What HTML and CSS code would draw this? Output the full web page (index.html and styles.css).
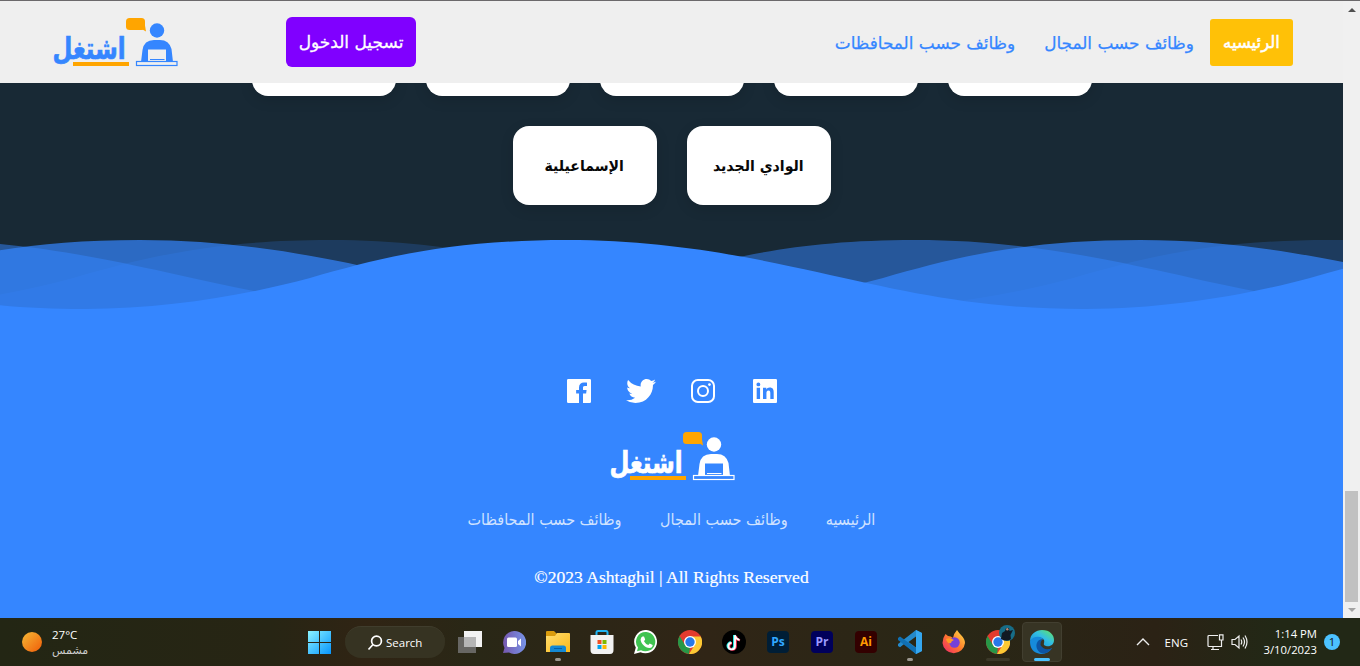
FILE: index.html
```html
<!DOCTYPE html>
<html lang="ar">
<head>
<meta charset="utf-8">
<title>اشتغل</title>
<link rel="stylesheet" href="styles.css">
</head>
<body>
<svg class="defs" width="0" height="0">
  <defs>
    <path id="wave" d="M-482 69C-400 69-320 55-257 38C-185 17-115 0 0 0C105 0 190 19 250 32C340 52 410 69 518 69V72H-482Z"/>
    <symbol id="logo" viewBox="0 0 128 52">
      <rect x="74" y="1" width="19" height="12" rx="3.500" fill="#ffa500"/>
      <path d="M88 11l6 3.500-1-6z" fill="#ffa500"/>
      <circle cx="105" cy="13.500" r="7.200" fill="currentColor"/>
      <path d="M89 45L90.500 33Q92 23 102 23H108Q117 23 119.500 32L121 45H114V32.500H96V45Z" fill="currentColor"/>
      <path d="M98 42.500H112.500" stroke="currentColor"/>
      <rect x="84.500" y="44.500" width="40.500" height="4" fill="none" stroke="currentColor" stroke-width="1.200"/>
      <path d="M21 47H77" stroke="#ffa500" stroke-width="4"/>
      <text class="logo-word" x="37" y="42" text-anchor="middle" textLength="73" lengthAdjust="spacingAndGlyphs" fill="currentColor" stroke="currentColor">اشتغل</text>
    </symbol>
    <linearGradient id="sun" x2="1" y2="1"><stop stop-color="#f6b936"/><stop offset="1" stop-color="#f05c08"/></linearGradient>
    <linearGradient id="win" x2="1" y2="1"><stop stop-color="#8bf3ff"/><stop offset="1" stop-color="#0795fd"/></linearGradient>
    <linearGradient id="chat" x2="1" y2="0"><stop stop-color="#7657ad"/><stop offset="1" stop-color="#7794e8"/></linearGradient>
    <linearGradient id="fold" x2="1" y2="1"><stop stop-color="#ffdd70"/><stop offset="1" stop-color="#fcb918"/></linearGradient>
    <linearGradient id="fox" x1="1" x2="0" y2="1"><stop stop-color="#ffe54a"/><stop offset=".5" stop-color="#ff7a2b"/><stop offset="1" stop-color="#f01f6f"/></linearGradient>
    <linearGradient id="edge" x1="0" x2="1" y1="1" y2="0"><stop stop-color="#1687d9"/><stop offset=".55" stop-color="#32bfe4"/><stop offset="1" stop-color="#68e857"/></linearGradient>
    <symbol id="chrome" viewBox="0 0 24 24">
      <circle cx="12" cy="12" r="12" fill="#e33b2e"/>
      <path d="M1.600 6L7 15L12 17.500L11 24A12 12 0 0 1 1.600 6Z" fill="#279847"/>
      <path d="M12 6.500H22.700A12 12 0 0 1 11 24L17 14.500Z" fill="#fcc934"/>
      <circle cx="12" cy="12" r="6" fill="#fff"/><circle cx="12" cy="12" r="4.700" fill="#2878e8"/>
    </symbol>
  </defs>
</svg>

<div class="browser">
  <div class="page">
    <header class="header">
      <svg class="logo" width="128" height="52"><use href="#logo"/></svg>
      <a class="login"><span>تسجيل الدخول</span></a>
      <nav class="nav" dir="rtl">
        <a class="nav-link active"><span>الرئيسيه</span></a>
        <a class="nav-link field"><span>وظائف حسب المجال</span></a>
        <a class="nav-link city"><span>وظائف حسب المحافظات</span></a>
      </nav>
    </header>
    <main class="cities">
      <div class="row cut"><i class="card"></i><i class="card"></i><i class="card"></i><i class="card"></i><i class="card"></i></div>
      <div class="row"><div class="card"><span>الإسماعيلية</span></div><div class="card"><span>الوادي الجديد</span></div></div>
    </main>
    <svg class="waves" width="1343" height="71" fill="#3586ff">
      <g opacity=".2"><use href="#wave" x="-670"/><use href="#wave" x="330"/><use href="#wave" x="1330"/></g>
      <g opacity=".5"><use href="#wave" x="-85"/><use href="#wave" x="915"/></g>
      <g opacity=".7"><use href="#wave" x="140"/><use href="#wave" x="1140"/></g>
      <g><use href="#wave" x="-433"/><use href="#wave" x="567"/><use href="#wave" x="1567"/></g>
    </svg>
    <footer class="footer">
      <div class="social">
        <svg width="32" height="32" viewBox="0 0 512 512" fill="#fff"><path d="M426.800 64H85.200A21.200 21.200 0 0 0 64 85.200v341.600A21.200 21.200 0 0 0 85.200 448H256V296h-45.900v-56H256v-41.500c0-49.600 34.400-76.600 78.700-76.600 21.200 0 44 1.600 49.300 2.300v51.800h-35.300c-24.100 0-28.700 11.400-28.700 28.200V240h57.400l-7.500 56H320v152h106.800a21.200 21.200 0 0 0 21.200-21.200V85.200A21.200 21.200 0 0 0 426.800 64z"/></svg>
        <svg width="32" height="32" viewBox="0 0 512 512" fill="#fff"><path d="M496 109.500a201.800 201.800 0 0 1-56.550 15.300 97.510 97.510 0 0 0 43.330-53.600 197.740 197.740 0 0 1-62.560 23.500A99.140 99.140 0 0 0 348.310 64c-54.420 0-98.460 43.400-98.460 96.900a93.210 93.210 0 0 0 2.540 22.100 280.700 280.700 0 0 1-203-101.300A95.690 95.690 0 0 0 36 130.400c0 33.600 17.530 63.300 44 80.700A97.500 97.500 0 0 1 35.220 199v1.200c0 47 34 86.100 79 95a100.760 100.760 0 0 1-25.940 3.400 94.380 94.380 0 0 1-18.510-1.800c12.510 38.500 48.920 66.500 92.050 67.300A199.590 199.590 0 0 1 39.500 405.600a203 203 0 0 1-23.500-1.400A278.680 278.680 0 0 0 166.740 448c181.360 0 280.440-147.700 280.440-275.800 0-4.200-.11-8.400-.31-12.500A198.480 198.480 0 0 0 496 109.500z"/></svg>
        <svg width="32" height="32" viewBox="0 0 512 512" fill="#fff"><rect x="80" y="80" width="352" height="352" rx="93" fill="none" stroke="#fff" stroke-width="32"/><circle cx="256" cy="256" r="80" fill="none" stroke="#fff" stroke-width="32"/><circle cx="359" cy="153" r="22"/></svg>
        <svg width="32" height="32" viewBox="0 0 512 512" fill="#fff"><path d="M430 64H82Q64 64 64 82V430Q64 448 82 448H430Q448 448 448 430V82Q448 64 430 64zM177 384h-54V205.500h54zm-27-202.500a31 31 0 1 1 0-62 31 31 0 0 1 0 62zM395 384h-54v-87.100c0-20.600-.4-47.200-29-47.200s-33 22.500-33 45.700V384h-55V205.500h53v24.700h1c8-15 26-29.200 52-29.200 55 0 65 35.400 65 83z"/></svg>
      </div>
      <svg class="foot-logo" width="128" height="52"><use href="#logo"/></svg>
      <nav class="foot-nav" dir="rtl"><a class="f1"><span>الرئيسيه</span></a><a class="f2"><span>وظائف حسب المجال</span></a><a class="f3"><span>وظائف حسب المحافظات</span></a></nav>
      <p class="copy">©2023 Ashtaghil | All Rights Reserved</p>
    </footer>
  </div>
  <div class="scroll"><i class="up"></i><i class="thumb"></i><i class="down"></i></div>
</div>

<div class="taskbar">
  <div class="weather">
    <svg width="20" height="20"><circle cx="10" cy="10" r="10" fill="url(#sun)"/></svg>
    <div class="temp"><b>27°C</b><small><span>مشمس</span></small></div>
  </div>
  <svg class="start" width="24" height="24"><path d="M1 1H12V12H1ZM13 1H24V12H13ZM1 13H12V24H1ZM13 13H24V24H13Z" fill="url(#win)"/></svg>
  <div class="search"><svg width="16" height="16" fill="none" stroke="#fff" stroke-width="1.700"><circle cx="9.500" cy="6" r="4.900"/><path d="M6 9.500L1.500 14.500"/></svg><span>Search</span></div>
  <div class="apps">
    <div class="app"><svg width="24" height="24"><rect x="6" y="1" width="18" height="16" fill="#f2f2f2"/><rect y="7" width="18" height="16" fill="#777" opacity=".8"/><rect x="6" y="7" width="12" height="10" fill="#b5b5b5"/></svg></div>
    <div class="app"><svg width="24" height="24"><path d="M12 1A11.500 11.500 0 1 1 7 22.500L1 23L2.500 18A11.500 11.500 0 0 1 12 1Z" fill="url(#chat)"/><rect x="5" y="7.500" width="10" height="9.500" rx="1.500" fill="#fff"/><path d="M16 11L19 8.500V16.500L16 14Z" fill="#fff"/></svg></div>
    <div class="app run"><svg width="24" height="24"><path d="M0 2Q0 1 1 1H8L11 4V9H0Z" fill="#d99b0d"/><path d="M0 6H9L11 3H23Q24 3 24 4V22H0Z" fill="url(#fold)"/><path d="M4 22V18Q4 15.500 6.500 15.500H17.500Q20 15.500 20 18V22Z" fill="#1489d4"/><path d="M8 18.500H16" stroke="#075fa5"/></svg></div>
    <div class="app"><svg width="24" height="24"><path d="M6.500 6V2.500Q6.500 1 8 1H16Q17.500 1 17.500 2.500V6" fill="none" stroke="#20b4f3" stroke-width="2"/><path d="M.5 5H23.500V20Q23.500 24 20 24H4Q.5 24 .5 20Z" fill="#f2f2f2"/><path d="M7.500 10H11.500V14H7.500Z" fill="#f25022"/><path d="M12.500 10H16.500V14H12.500Z" fill="#7fba00"/><path d="M7.500 15H11.500V19H7.500Z" fill="#00a4ef"/><path d="M12.500 15H16.500V19H12.500Z" fill="#ffb900"/></svg></div>
    <div class="app"><svg width="24" height="24"><path d="M12.500 0A11.700 11.700 0 1 1 6.500 22.300L0 24L1.800 17.500A11.700 11.700 0 0 1 12.500 0Z" fill="#fff"/><path d="M12.500 2A9.700 9.700 0 1 1 7 20.200L3 21.200L4 17.500A9.700 9.700 0 0 1 12.500 2Z" fill="#3fc351"/><path d="M8.500 6.500L10 6.500L11.200 9.600L10 11.200Q11.500 14 14.300 15L15.700 13.400L18.700 15Q18.500 18 15.500 18C11 18 6.500 13 6.600 9.500Q7 7 8.500 6.500Z" fill="#fff"/></svg></div>
    <div class="app"><svg width="24" height="24"><use href="#chrome"/></svg></div>
    <div class="app"><svg width="24" height="24" fill="none" stroke-width="2.300"><circle cx="12" cy="12" r="12" fill="#000"/><path d="M12.200 5V15.500A3.300 3.300 0 1 1 9 12.500M12.200 5Q13 9 17 9.500" stroke="#25f4ee"/><path d="M13.700 6V16.500A3.300 3.300 0 1 1 10 13M13.700 6Q14.500 9.500 18 10.500" stroke="#fe2c55"/><path d="M13 5.300V16A3.300 3.300 0 1 1 9.500 12.800M13 5.300Q13.800 9.300 17.500 9.800" stroke="#fff" stroke-width="1.800"/></svg></div>
    <div class="app"><em class="tile ps">Ps</em></div>
    <div class="app"><em class="tile pr">Pr</em></div>
    <div class="app"><em class="tile ai">Ai</em></div>
    <div class="app run"><svg width="24" height="24"><path d="M18 0L24 3V21L18 24L6.500 13.800L2 17.200L0 16V14L18 0Z" fill="#2489ca"/><path d="M0 8L2 6.500L18 18V24L0 10Z" fill="#1070b3"/><path d="M18 6.500V17.500L10.500 12Z" fill="#292716"/><path d="M18 0L24 3V21L18 24Z" fill="#35a7ef"/></svg></div>
    <div class="app"><svg width="24" height="24"><path d="M15 0Q17 3 19 5Q23 9 23 13A11.300 11.300 0 0 1 .5 13Q.5 8 3.500 4L6 6Q9 6 11 8Q12 3 15 0Z" fill="url(#fox)"/><circle cx="12.500" cy="12.500" r="5.200" fill="#7541d8"/><path d="M4 9Q8 7 12 10Q9 11 9 13Q5 14 4 9Z" fill="#ff9b24"/></svg></div>
    <div class="app faint"><svg width="30" height="30" viewBox="0 -6 30 30"><use href="#chrome" width="24" height="24"/><circle cx="21" cy="3" r="8" fill="#176d87"/><path d="M15 9L16 3L19 1L20-2H23L23.500 1L27 0L24.500 5L25 9Q21 12 15 9Z" fill="#111923"/><circle cx="21.300" cy="-.8" r="1.200" fill="#b98b75"/></svg></div>
    <div class="app current"><svg width="24" height="24"><path d="M0 11C0 4 6 0 12 0C20 0 24 5 24 10C24 15 20 17 16 16C12 15 15 13 14 10C13 7 7 6 0 11Z" fill="url(#edge)"/><path d="M0 11C3 6 11 5 14 10C9 8 7 13 10 17C13 21 18 21 22 18C18 24 12 25 7 23C2 21 0 17 0 11Z" fill="#168bdb"/><path d="M8 11C4 16 8 24 14 23.500C18 23 21 20 22 18C17 21 12 18 10.500 15Q10 12 12 10Q10 9 8 11Z" fill="#0d55a4"/></svg></div>
  </div>
  <div class="tray">
    <svg class="chev" width="14" height="8" fill="none" stroke="#eee" stroke-width="1.400"><path d="M1 7L7 1L13 7"/></svg>
    <span class="lang">ENG</span>
    <svg class="net" width="17" height="17" fill="none" stroke="#eee" stroke-width="1.200"><path d="M11 1.500H2Q1 1.500 1 2.500V11.500Q1 12.500 2 12.500H14.500V6.500M12.500 .8H16V6H12.500ZM6 12.500V15M4 15.500H12"/></svg>
    <svg class="vol" width="17" height="16" fill="none" stroke="#eee" stroke-width="1.200"><path d="M1 5.500H4L8 2V14L4 10.500H1ZM10 5.500Q11.500 8 10 10.500M12 3.500Q15 8 12 12.500M14 1.500Q18 8 14 14.500"/></svg>
    <div class="clock">1:14 PM<br>3/10/2023</div>
    <span class="count">1</span>
  </div>
</div>
</body>
</html>
```

FILE: styles.css
```css
* { box-sizing: border-box; }
body { margin: 0; width: 1360px; height: 666px; overflow: hidden; font-family: "DejaVu Sans", sans-serif; }
.defs { display: block; }
svg { display: block; flex: none; }
.browser { display: flex; height: 618px; border-top: 1px solid #6b696b; background: #efefef; }
.page { width: 1343px; background: #182935; }
.header { display: flex; align-items: flex-start; height: 82px; padding: 16px 50px 0 52px; background: #efefef; }
.logo { color: #3586ff; }
.logo-word { font: bold 30px "DejaVu Sans", sans-serif; stroke-width: .7px; }
.login, .nav-link, .card, .foot-nav a { display: flex; align-items: center; justify-content: center; white-space: nowrap; }
.login { width: 130px; height: 50px; margin-left: 106px; border-radius: 6px; background: #8000ff; color: #fff; font-size: 17px; -webkit-text-stroke: .3px; }
.nav { display: flex; margin-left: auto; padding-top: 2px; gap: 17px; font-size: 16.9px; -webkit-text-stroke: .25px; }
.nav-link { height: 47px; color: #3586ff; }
.active { width: 83px; border-radius: 3px; background: #ffc107; color: #fff; font-size: 16.500px; -webkit-text-stroke: .5px; }
.field { width: 148px; }
.city { width: 180px; margin-right: 13px; }
.cities { height: 157px; overflow: hidden; }
.row { display: flex; justify-content: center; gap: 30px; }
.card { width: 144px; height: 79px; border-radius: 16px; background: #fff; box-shadow: 0 4px 14px rgba(0,0,0,.12); font-size: 15px; font-weight: bold; color: #080808; }
.card span { transform: scaleX(.94); }
.cut { margin-top: -66px; margin-bottom: 30px; }
.waves { overflow: hidden; }
.footer { height: 308px; margin-top: -1px; padding-top: 65px; background: #3586ff; color: #fff; }
.social { display: flex; justify-content: center; gap: 30px; }
.foot-logo { margin: 24px 0 0 609px; }
.foot-nav { display: flex; justify-content: flex-start; gap: 38px; height: 24px; margin: 24px 467px 0; color: #cfe2ff; font-size: 16px; }
.foot-nav span { transform: scaleX(.9); }
.f1 { width: 50px; }
.f2 { width: 129px; }
.f3 { width: 154px; }
.copy { margin: 36px 0 0; text-align: center; font: 17.600px/21px "Liberation Serif", serif; -webkit-text-stroke: .2px; }
.scroll { display: flex; flex-direction: column; align-items: center; width: 17px; padding: 7px 0 6px; background: #f0f0f0; }
.up, .down { border: 4px solid transparent; }
.up { border-top: 0; border-bottom-color: #505050; }
.down { border-bottom: 0; border-top-color: #a3a3a3; margin-top: 6px; }
.thumb { width: 13px; height: 111px; margin-top: auto; background: #c1c1c1; }
.taskbar { display: flex; align-items: center; height: 48px; background: linear-gradient(90deg, #232614, #272514 20%, #302414 27%, #292716 35%, #302516 52%, #292716 70%, #2b2215 85%, #222816 94%, #222816); color: #fff; font-family: "Open Sans", sans-serif; }
.weather { display: flex; align-items: center; gap: 10px; width: 285px; padding-left: 22px; }
.temp { font-size: 11.500px; line-height: 17px; }
.temp b { display: block; font-weight: 400; }
.temp small { display: block; font: 11px/15px "DejaVu Sans", sans-serif; color: #ccc; }
.start { margin-left: 22px; }
.search { display: flex; align-items: center; gap: 3px; width: 100px; height: 32px; margin-left: 14px; padding-left: 22px; border-radius: 16px; background: #363322; border-top: 1px solid #403d2d; font-size: 11.500px; }
.apps { display: flex; align-items: center; gap: 4px; margin-left: 5px; }
.app { position: relative; display: flex; align-items: center; justify-content: center; width: 40px; height: 40px; border-radius: 4px; }
.run::after, .faint::after, .current::after { content: ""; position: absolute; bottom: 1px; width: 6px; height: 3px; border-radius: 2px; background: #9b978f; }
.faint::after { width: 24px; background: #3b3828; }
.current { background: #373424; border: 1px solid #423f30; }
.current::after { bottom: 0; width: 16px; background: #4cc2ff; }
.faint svg { transform: translate(3px, -3px); }
.tile { width: 22px; height: 22px; border-radius: 4px; text-align: center; font: bold 12px/21px "Open Sans", sans-serif; }
.ps { background: #001e36; color: #31a8ff; }
.pr { background: #00005b; color: #9999ff; }
.ai { background: #330000; color: #ff9a00; }
.tray { display: flex; align-items: center; margin-left: auto; padding-right: 20px; color: #fff; font-size: 11.300px; }
.lang { margin-left: 15px; font-size: 11.500px; }
.net { margin-left: 19px; }
.vol { margin-left: 7px; }
.clock { width: 69px; text-align: right; line-height: 16px; white-space: nowrap; }
.count { width: 16px; height: 16px; margin-left: 7px; border-radius: 50%; background: #4cc2ff; color: #111; text-align: center; line-height: 16px; }
```
